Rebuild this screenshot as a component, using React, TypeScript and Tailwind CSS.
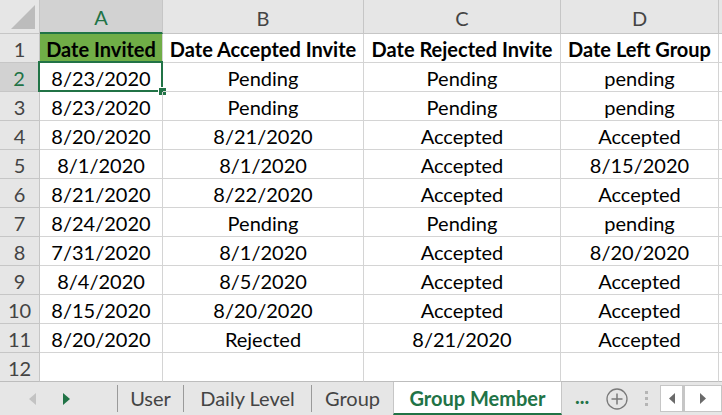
import React from 'react';

const rows: string[][] = [
  ['8/23/2020', 'Pending', 'Pending', 'pending'],
  ['8/23/2020', 'Pending', 'Pending', 'pending'],
  ['8/20/2020', '8/21/2020', 'Accepted', 'Accepted'],
  ['8/1/2020', '8/1/2020', 'Accepted', '8/15/2020'],
  ['8/21/2020', '8/22/2020', 'Accepted', 'Accepted'],
  ['8/24/2020', 'Pending', 'Pending', 'pending'],
  ['7/31/2020', '8/1/2020', 'Accepted', '8/20/2020'],
  ['8/4/2020', '8/5/2020', 'Accepted', 'Accepted'],
  ['8/15/2020', '8/20/2020', 'Accepted', 'Accepted'],
  ['8/20/2020', 'Rejected', '8/21/2020', 'Accepted'],
];

const widths = ['w-[123px]', 'w-[201px]', 'w-[197px]', 'w-[158px]'];
const cell = 'h-[29px] shrink-0 border-r border-b border-[#d4d4d4] flex items-center justify-center leading-none pt-[1px]';
const rowHead = 'w-[40px] h-[29px] shrink-0 bg-[#e6e6e6] border-r border-b border-[#c6c6c6] flex items-center justify-center text-[#444] pt-[1px]';

export default function App() {
  return (
    <div className="w-[722px] h-[415px] overflow-hidden bg-white text-[20px] text-black flex flex-col" style={{ fontFamily: 'Lato, "Open Sans", sans-serif' }}>
      {/* column headers */}
      <div className="flex h-[34px] shrink-0 bg-[#e6e6e6]">
        <div className="w-[40px] h-[34px] shrink-0 border-r border-b border-[#c6c6c6] relative">
          <svg className="absolute right-[4px] bottom-[4px]" width="24" height="24" viewBox="0 0 24 24">
            <polygon points="24,0 24,24 0,24" fill="#bcbcbc" />
          </svg>
        </div>
        <div className="w-[123px] h-[34px] shrink-0 bg-[#d2d2d2] border-r border-[#c6c6c6] border-b-2 border-b-[#217346] flex items-center justify-center text-[#217346] pt-[2px]">A</div>
        {['B', 'C', 'D'].map((c, i) => (
          <div key={c} className={`${widths[i + 1]} h-[34px] shrink-0 border-r border-b border-[#c6c6c6] flex items-center justify-center text-[#444] pt-[2px]`}>{c}</div>
        ))}
        <div className="flex-1 h-[34px] border-b border-[#c6c6c6]" />
      </div>

      {/* row 1 headings */}
      <div className="flex shrink-0">
        <div className={rowHead}>1</div>
        <div className={`${cell} ${widths[0]} bg-[#70ad47] font-bold`}>Date Invited</div>
        <div className={`${cell} ${widths[1]} font-bold`}>Date Accepted Invite</div>
        <div className={`${cell} ${widths[2]} font-bold`}>Date Rejected Invite</div>
        <div className={`${cell} ${widths[3]} font-bold`}>Date Left Group</div>
        <div className="flex-1 h-[29px] border-b border-[#d4d4d4]" />
      </div>

      {rows.map((r, ri) => (
        <div key={ri} className="flex shrink-0">
          {ri === 0 ? (
            <div className="w-[40px] h-[29px] shrink-0 bg-[#d2d2d2] border-r-2 border-r-[#217346] border-b border-[#c6c6c6] flex items-center justify-center text-[#217346] pt-[1px]">2</div>
          ) : (
            <div className={rowHead}>{ri + 2}</div>
          )}
          {r.map((v, ci) => (
            <div key={ci} className={`${cell} ${widths[ci]} relative`}>
              {v}
              {ri === 0 && ci === 0 && (
                <>
                  <div className="absolute left-[-2px] top-[-2px] right-[-1px] bottom-[-1px] border-2 border-[#217346]" />
                  <div className="absolute right-[-5px] bottom-[-5px] w-[9px] h-[9px] bg-[#217346] border border-white" />
                </>
              )}
            </div>
          ))}
          <div className="flex-1 h-[29px] border-b border-[#d4d4d4]" />
        </div>
      ))}

      {/* empty row 12 */}
      <div className="flex shrink-0">
        <div className={`${rowHead} border-b-[#bdbdbd]`}>12</div>
        {widths.map((w, i) => (
          <div key={i} className={`${cell} ${w} border-b-[#bdbdbd]`} />
        ))}
        <div className="flex-1 h-[29px] border-b border-[#bdbdbd]" />
      </div>

      {/* sheet tabs */}
      <div className="flex-1 bg-[#e6e6e6] flex items-stretch text-[#444] leading-none">
        <div className="w-[118px] shrink-0 flex items-center border-r border-[#9a9a9a] my-[3px]">
          <svg className="ml-[29px]" width="7" height="12" viewBox="0 0 7 12">
            <polygon points="7,0 7,12 0,6" fill="#c3c3c3" />
          </svg>
          <svg className="ml-[27px]" width="7" height="12" viewBox="0 0 7 12">
            <polygon points="0,0 0,12 7,6" fill="#217346" />
          </svg>
        </div>
        <div className="w-[66px] shrink-0 flex items-center justify-center border-r border-[#9a9a9a] my-[3px] pb-[2px]">User</div>
        <div className="w-[128px] shrink-0 flex items-center justify-center border-r border-[#9a9a9a] my-[3px] pb-[2px]">Daily Level</div>
        <div className="w-[81px] shrink-0 flex items-center justify-center pb-[2px]">Group</div>
        <div className="w-[169px] shrink-0 bg-white border-x border-[#c6c6c6] border-b-2 border-b-[#217346] flex items-center justify-center font-bold text-[#217346]">Group Member</div>
        <div className="w-[40px] shrink-0 flex items-center justify-center text-[#217346] font-bold pb-[6px]">...</div>
        <div className="w-[30px] shrink-0 flex items-center justify-center">
          <svg width="22" height="22" viewBox="0 0 22 22">
            <circle cx="11" cy="11" r="10" fill="none" stroke="#7a7a7a" strokeWidth="1.3" />
            <path d="M11 5.5v11M5.5 11h11" stroke="#7a7a7a" strokeWidth="1.5" />
          </svg>
        </div>
        <div className="w-[28px] shrink-0 flex flex-col items-center justify-center gap-[3px]">
          <div className="w-[3px] h-[3px] bg-[#b5b5b5]" />
          <div className="w-[3px] h-[3px] bg-[#b5b5b5]" />
          <div className="w-[3px] h-[3px] bg-[#b5b5b5]" />
        </div>
        <div className="flex-1 flex items-center">
          <div className="h-[27px] flex-1 bg-white border border-[#c6c6c6] flex items-center">
            <div className="w-[24px] h-full flex items-center justify-center border-r-[3px] border-[#c6c6c6]">
              <svg width="6" height="11" viewBox="0 0 6 11"><polygon points="6,0 6,11 0,5.5" fill="#6a6a6a" /></svg>
            </div>
            <div className="flex-1 h-full flex items-center justify-center">
              <svg width="6" height="11" viewBox="0 0 6 11"><polygon points="0,0 0,11 6,5.5" fill="#6a6a6a" /></svg>
            </div>
          </div>
        </div>
      </div>
    </div>
  );
}
